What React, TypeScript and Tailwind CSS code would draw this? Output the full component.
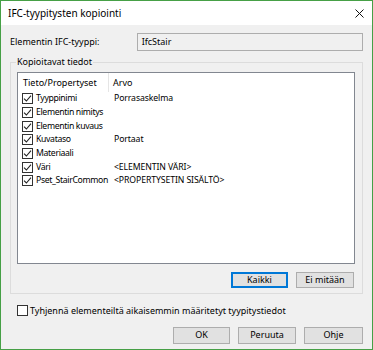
import React from "react";

const rows: { name: string; value: string }[] = [
  { name: "Tyyppinimi", value: "Porrasaskelma" },
  { name: "Elementin nimitys", value: "" },
  { name: "Elementin kuvaus", value: "" },
  { name: "Kuvataso", value: "Portaat" },
  { name: "Materiaali", value: "" },
  { name: "Väri", value: "<ELEMENTIN VÄRI>" },
  { name: "Pset_StairCommon", value: "<PROPERTYSETIN SISÄLTÖ>" },
];

function Check({ checked }: { checked: boolean }) {
  return (
    <span className="flex h-[11px] w-[11px] shrink-0 items-center justify-center border border-[#333] bg-white">
      {checked && (
        <svg width="9" height="9" viewBox="0 0 9 9">
          <path d="M1 4.6 L3.4 7 L8 1.6" fill="none" stroke="#222" strokeWidth="1.1" />
        </svg>
      )}
    </span>
  );
}

function Btn({ label, primary, className }: { label: string; primary?: boolean; className?: string }) {
  return (
    <button
      className={
        "flex w-[57px] items-center justify-center bg-[#e1e1e1] text-black " +
        (primary ? "border-2 border-[#0078d7] " : "border border-[#adadad] ") +
        (className ?? "")
      }
    >
      {label}
    </button>
  );
}

export default function App() {
  return (
    <div
      className="flex h-[350px] w-[373px] flex-col border border-[#46a046] bg-[#f0f0f0] text-[9px] text-black"
      style={{ fontFamily: '"Noto Sans", "Liberation Sans", sans-serif' }}
    >
      <div className="flex h-[24px] items-center justify-between bg-white pl-[7px] pr-[8px] text-[10px]">
        <span>IFC-tyypitysten kopiointi</span>
        <svg width="9" height="9" viewBox="0 0 9 9">
          <path d="M0.5 0.5 L8.5 8.5 M8.5 0.5 L0.5 8.5" stroke="#111" strokeWidth="1" />
        </svg>
      </div>

      <div className="flex flex-1 flex-col px-[9px]">
        <div className="mt-[8px] flex h-[18px] items-center">
          <span className="w-[127px]">Elementin IFC-tyyppi:</span>
          <div className="flex h-[18px] w-[227px] items-center border border-[#adadad] bg-[#f0f0f0] pl-[4px]">
            IfcStair
          </div>
        </div>

        <div className="relative mt-[11px] flex h-[232px] flex-col border border-[#dcdcdc] pl-[6px] pr-[7px]">
          <span className="absolute left-[5px] top-[-7px] bg-[#f0f0f0] px-[1px] leading-[12px]">
            Kopioitavat tiedot
          </span>
          <div className="mt-[9px] h-[192px] border border-[#828790] bg-white text-[8.7px]">
            <div className="flex h-[19px] items-center text-[9px]">
              <span className="w-[91px] border-r border-[#e5e5e5] pl-[5px] leading-[19px]">Tieto/Propertyset</span>
              <span className="pl-[4px]">Arvo</span>
            </div>
            {rows.map((r) => (
              <div key={r.name} className="flex h-[13.67px] items-center">
                <div className="flex w-[91px] shrink-0 items-center gap-[3px] pl-[4px]">
                  <Check checked />
                  <span className="whitespace-nowrap tracking-[-0.35px]">{r.name}</span>
                </div>
                <span className="whitespace-nowrap pl-[5px] tracking-[-0.1px]">{r.value}</span>
              </div>
            ))}
          </div>
          <div className="mt-[8px] flex justify-end gap-[8px] pr-[1px]">
            <Btn label="Kaikki" primary className="h-[16px]" />
            <Btn label="Ei mitään" className="h-[16px] w-[58px]" />
          </div>
        </div>

        <div className="mt-[10px] flex items-center gap-[2px] pl-[7px]">
          <Check checked={false} />
          <span>Tyhjennä elementeiltä aikaisemmin määritetyt tyypitystiedot</span>
        </div>

        <div className="mt-[9px] flex justify-end gap-[8px]">
          <Btn label="OK" className="h-[17px]" />
          <Btn label="Peruuta" className="h-[17px] w-[58px]" />
          <Btn label="Ohje" className="h-[17px] w-[59px]" />
        </div>
      </div>
    </div>
  );
}
